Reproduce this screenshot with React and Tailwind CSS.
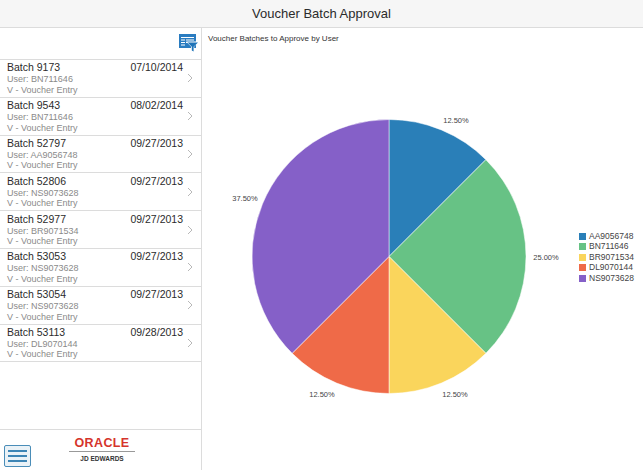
const BATCHES = [
  { id: '9173', date: '07/10/2014', user: 'BN711646' },
  { id: '9543', date: '08/02/2014', user: 'BN711646' },
  { id: '52797', date: '09/27/2013', user: 'AA9056748' },
  { id: '52806', date: '09/27/2013', user: 'NS9073628' },
  { id: '52977', date: '09/27/2013', user: 'BR9071534' },
  { id: '53053', date: '09/27/2013', user: 'NS9073628' },
  { id: '53054', date: '09/27/2013', user: 'NS9073628' },
  { id: '53113', date: '09/28/2013', user: 'DL9070144' },
]

const SLICES = [
  { name: 'AA9056748', value: 12.5, color: '#2a7fb8', swatch: 'bg-[#2a7fb8]', label: [456, 120] },
  { name: 'BN711646', value: 25, color: '#67c285', swatch: 'bg-[#67c285]', label: [546, 257] },
  { name: 'BR9071534', value: 12.5, color: '#fad55c', swatch: 'bg-[#fad55c]', label: [455, 394] },
  { name: 'DL9070144', value: 12.5, color: '#ef6a48', swatch: 'bg-[#ef6a48]', label: [322, 394] },
  { name: 'NS9073628', value: 37.5, color: '#8560c8', swatch: 'bg-[#8560c8]', label: [245, 198] },
]

// svg sits at x=202, y=46 in the page
const CX = 187
const CY = 210.5
const R = 137

function slicePath(start, end) {
  const a0 = (start / 100) * 2 * Math.PI
  const a1 = (end / 100) * 2 * Math.PI
  const x0 = CX + R * Math.sin(a0)
  const y0 = CY - R * Math.cos(a0)
  const x1 = CX + R * Math.sin(a1)
  const y1 = CY - R * Math.cos(a1)
  const large = end - start > 50 ? 1 : 0
  return `M${CX} ${CY}L${x0} ${y0}A${R} ${R} 0 ${large} 1 ${x1} ${y1}Z`
}

function Pie() {
  let acc = 0
  return (
    <svg width="377" height="424" className="shrink-0">
      {SLICES.map((s) => {
        const d = slicePath(acc, acc + s.value)
        acc += s.value
        return <path key={s.name} d={d} fill={s.color} stroke="#fff" strokeWidth="0.5" />
      })}
      {SLICES.map((s) => (
        <text
          key={s.name}
          x={s.label[0] - 202}
          y={s.label[1] - 46 + 3}
          textAnchor="middle"
          fontSize="7.5"
          fill="#444"
        >
          {s.value.toFixed(2)}%
        </text>
      ))}
    </svg>
  )
}

function FilterIcon() {
  return (
    <svg width="20" height="19" viewBox="0 0 20 19">
      <rect x="0" y="0" width="17" height="14" fill="#2a7cc0" />
      <rect x="2" y="3" width="13" height="1" fill="#fff" />
      <rect x="2" y="5.5" width="4" height="1" fill="#fff" />
      <rect x="7" y="5.5" width="8" height="1" fill="#fff" />
      <rect x="2" y="8" width="4" height="1" fill="#fff" />
      <rect x="7" y="8" width="3" height="1" fill="#fff" />
      <rect x="2" y="10.5" width="4" height="1" fill="#fff" />
      <path d="M7 7.5H20L15.2 12.5V19L12 17V12.5Z" fill="#fff" />
      <path d="M8.5 8.5H19L14.6 12.8V17.6L12.8 16.4V12.8Z" fill="#1f74b8" />
    </svg>
  )
}

function BatchRow({ batch }) {
  return (
    <div className="flex h-[37.8px] shrink-0 items-center border-b border-[#dcdcdc] pl-[7px] pr-[8px]">
      <div className="min-w-0 flex-1">
        <div className="flex justify-between text-[10.5px] leading-[12px] text-[#2b2b2b]">
          <span>Batch {batch.id}</span>
          <span>{batch.date}</span>
        </div>
        <div className="mt-[1px] text-[9px] leading-[10.5px] text-[#8a8a8a]">User: {batch.user}</div>
        <div className="text-[9px] leading-[10.5px] text-[#8a8a8a]">V - Voucher Entry</div>
      </div>
      <svg width="6" height="10" viewBox="0 0 6 10" className="ml-[4px] shrink-0">
        <path d="M1 1l4 4-4 4" fill="none" stroke="#b8b8b8" strokeWidth="1" />
      </svg>
    </div>
  )
}

export default function App() {
  return (
    <div className="flex h-[470px] w-[643px] flex-col overflow-hidden bg-white font-['Liberation_Sans',sans-serif]">
      <header className="flex h-[28px] shrink-0 items-center justify-center border-b border-[#dcdcdc] bg-[#f6f6f6] text-[13px] text-[#2b2b2b]">
        Voucher Batch Approval
      </header>
      <div className="flex min-h-0 flex-1">
        {/* Left list */}
        <aside className="flex w-[202px] shrink-0 flex-col border-r border-[#dcdcdc]">
          <div className="flex h-[32px] shrink-0 items-center justify-end border-b border-[#dcdcdc] pr-[2px]">
            <FilterIcon />
          </div>
          <div className="flex flex-1 flex-col">
            {BATCHES.map((b) => (
              <BatchRow key={b.id} batch={b} />
            ))}
          </div>
          <div className="flex h-[41px] shrink-0 border-t border-[#dcdcdc]">
            <div className="ml-[4px] mt-[15px] flex h-[22px] w-[27px] flex-col justify-center gap-[3px] rounded-[2px] border border-[#4a8db8] bg-[#eaf2f7] px-[3px]">
              <div className="h-[2px] bg-[#3d85b5]" />
              <div className="h-[2px] bg-[#3d85b5]" />
              <div className="h-[2px] bg-[#3d85b5]" />
            </div>
            <div className="ml-[38px] mt-[7px] flex w-[66px] flex-col items-center">
              <div className="h-[12px] text-[12.5px] font-bold leading-[12px] tracking-[0.4px] text-[#d5342c]">ORACLE</div>
              <div className="mt-[2px] h-px w-full bg-[#999]" />
              <div className="mt-[2px] text-[6.5px] font-bold leading-[9px] text-[#333]">JD EDWARDS</div>
            </div>
          </div>
        </aside>
        {/* Chart */}
        <main className="flex min-w-0 flex-1 flex-col">
          <div className="h-[18px] shrink-0 pl-[6px] pt-[6px] text-[8px] leading-[10px] text-[#333]">
            Voucher Batches to Approve by User
          </div>
          <div className="flex flex-1">
            <Pie />
            <div className="mt-[185px] flex flex-col">
              {SLICES.map((s) => (
                <div key={s.name} className="flex h-[10.5px] items-center gap-[3px] text-[8.5px] text-[#444]">
                  <span className={`h-[7px] w-[7px] ${s.swatch}`} />
                  {s.name}
                </div>
              ))}
            </div>
          </div>
        </main>
      </div>
    </div>
  )
}
